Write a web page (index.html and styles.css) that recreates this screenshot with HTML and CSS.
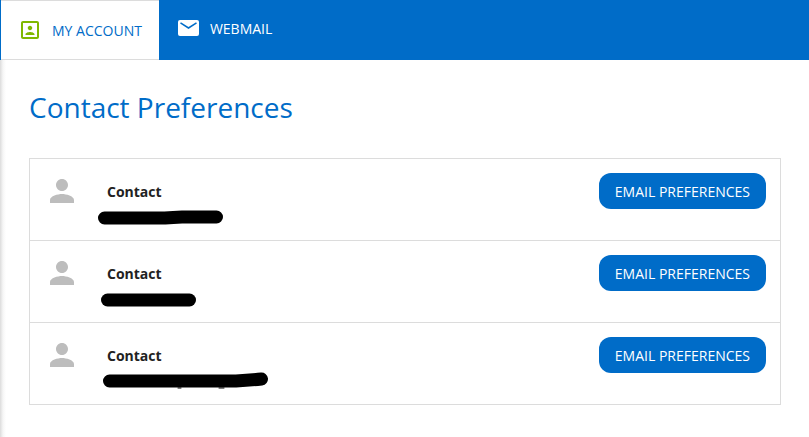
FILE: index.html
```html
<!DOCTYPE html>
<html lang="en">
<head>
<meta charset="utf-8">
<title>Contact Preferences</title>
<link rel="stylesheet" href="styles.css">
</head>
<body>
<nav class="topbar">
  <a class="tab tab-active" href="#account">
    <svg class="tab-icon" viewBox="0 0 24 24" aria-hidden="true"><path fill="currentColor" d="M12 12.250c1.240 0 2.250-1.010 2.250-2.250S13.240 7.750 12 7.750 9.750 8.760 9.750 10s1.010 2.250 2.250 2.250zm4.500 4c0-1.500-3-2.250-4.500-2.250s-4.500.75-4.500 2.250V17h9v-.75zM19 3H5c-1.100 0-2 .9-2 2v14c0 1.100.9 2 2 2h14c1.100 0 2-.9 2-2V5c0-1.100-.9-2-2-2zm0 16H5V5h14v14z"/></svg>
    <span>MY ACCOUNT</span>
  </a>
  <a class="tab" href="#webmail">
    <svg class="tab-icon" viewBox="0 0 24 24" aria-hidden="true"><rect x="2" y="4" width="21" height="16" rx="2" fill="currentColor"/><path class="flap" d="M4.500 6.800l8 5.200 8-5.200"/></svg>
    <span>WEBMAIL</span>
  </a>
</nav>
<main class="page">
  <h1 class="title">Contact Preferences</h1>
  <ul class="contacts">
    <li class="contact">
      <svg class="person" viewBox="0 0 24 24" aria-hidden="true"><path fill="currentColor" d="M12 12c2.210 0 4-1.790 4-4s-1.790-4-4-4-4 1.790-4 4 1.790 4 4 4zm0 2c-2.670 0-8 1.340-8 4v2h16v-2c0-2.660-5.330-4-8-4z"/></svg>
      <div class="details">
        <h2 class="name">Contact</h2>
        <svg class="mark" viewBox="0 0 180 20" aria-hidden="true"><path d="M7.500 13H68Q76 12.300 85 12H119.500"/></svg>
      </div>
      <button class="button" type="button">EMAIL PREFERENCES</button>
    </li>
    <li class="contact">
      <svg class="person" viewBox="0 0 24 24" aria-hidden="true"><path fill="currentColor" d="M12 12c2.210 0 4-1.790 4-4s-1.790-4-4-4-4 1.790-4 4 1.790 4 4 4zm0 2c-2.670 0-8 1.340-8 4v2h16v-2c0-2.660-5.330-4-8-4z"/></svg>
      <div class="details">
        <h2 class="name">Contact</h2>
        <svg class="mark" viewBox="0 0 180 20" aria-hidden="true"><path d="M10.500 13H92.500"/></svg>
      </div>
      <button class="button" type="button">EMAIL PREFERENCES</button>
    </li>
    <li class="contact">
      <svg class="person" viewBox="0 0 24 24" aria-hidden="true"><path fill="currentColor" d="M12 12c2.210 0 4-1.790 4-4s-1.790-4-4-4-4 1.790-4 4 1.790 4 4 4zm0 2c-2.670 0-8 1.340-8 4v2h16v-2c0-2.660-5.330-4-8-4z"/></svg>
      <div class="details">
        <h2 class="name">Contact</h2>
        <svg class="mark" viewBox="0 0 180 20" aria-hidden="true"><path d="M12.500 12H139Q152 11.400 164.500 10"/><path class="tail" d="M81 19h3M122 19h5"/></svg>
      </div>
      <button class="button" type="button">EMAIL PREFERENCES</button>
    </li>
  </ul>
</main>
</body>
</html>
```
FILE: styles.css
```css
* {
  box-sizing: border-box;
}

body {
  display: flex;
  flex-direction: column;
  min-height: 100vh;
  margin: 0;
  background: #fff;
  color: #222;
  font-family: "Open Sans", "Noto Sans", sans-serif;
  font-size: 14px;
  line-height: 20px;
}

.topbar {
  display: flex;
  height: 60px;
  padding-left: 1px;
  background: #006cc8;
}

.tab {
  display: flex;
  align-items: center;
  gap: 10px;
  padding: 0 17px 4px;
  color: #fff;
  text-decoration: none;
}

.tab-active {
  padding-bottom: 0;
  border: solid #dcdcdc;
  border-width: 1px 0;
  background: #fff;
  color: #006cc8;
}

.tab-icon {
  width: 24px;
  height: 24px;
}

.tab span {
  padding-top: 2px;
}

.tab-active .tab-icon {
  color: #7fb800;
}

.flap {
  fill: none;
  stroke: #006cc8;
  stroke-width: 1.5;
}

.page {
  flex: 1;
  padding: 28px 28px 32px 29px;
  background: linear-gradient(to right, #dcdcdc, #f6f6f6 3px, #fff 6px);
}

.title {
  margin: 0 0 32px;
  color: #006cc8;
  font-size: 28px;
  font-weight: 400;
  line-height: 38px;
}

.contacts {
  margin: 0;
  padding: 0;
  border: 1px solid #dcdcdc;
  background: #fff;
  list-style: none;
}

.contact {
  display: flex;
  align-items: flex-start;
  min-height: 81px;
  padding: 14px;
}

.contact + .contact {
  min-height: 82px;
  border-top: 1px solid #dcdcdc;
}

.person {
  flex: none;
  width: 36px;
  height: 36px;
  color: #bdbdbd;
}

.details {
  flex: 1;
  padding: 9px 0 0 27px;
}

.name {
  margin: 0;
  font-size: 14px;
  line-height: 20px;
}

.mark {
  display: block;
  width: 180px;
  height: 20px;
  margin: 3px 0 0 -10px;
  fill: none;
  stroke: #000;
  stroke-width: 13;
  stroke-linecap: round;
}

.tail {
  stroke-width: 1;
}

.button {
  height: 36px;
  padding: 2px 16px 0;
  border: 0;
  border-radius: 12px;
  background: #006cc8;
  color: #fff;
  font: inherit;
}
```
